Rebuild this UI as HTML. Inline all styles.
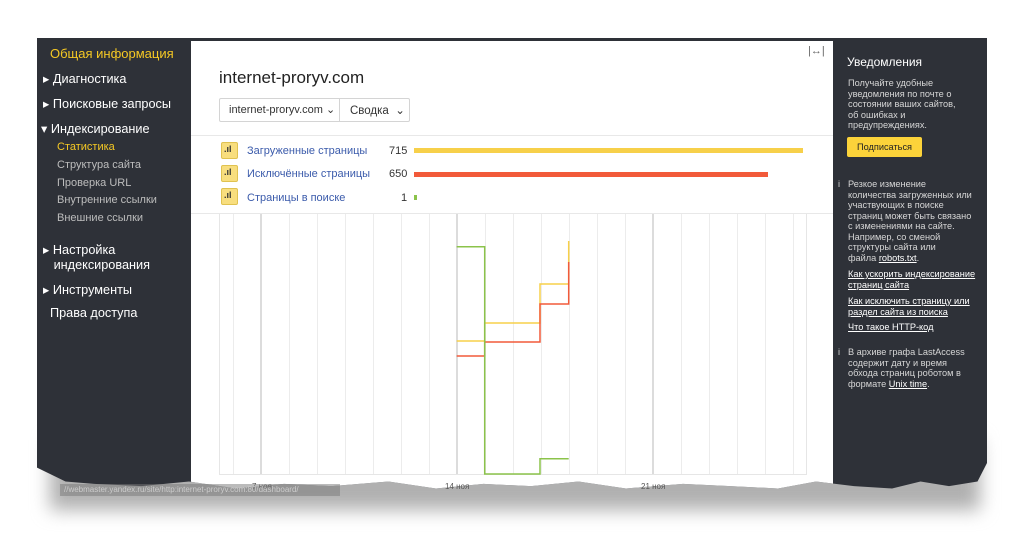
<!DOCTYPE html>
<html><head><meta charset="utf-8"><style>
*{margin:0;padding:0;box-sizing:border-box}
body{width:1024px;height:538px;background:#fff;position:relative;overflow:hidden;font-family:"Liberation Sans",Arial,sans-serif}
.a{position:absolute;white-space:nowrap}
#shadow{position:absolute;left:50px;top:440px;width:930px;height:70px;background:#b0b0b0;filter:blur(9px)}
#frame{position:absolute;left:37px;top:38px;width:950px;height:462px;background:#2e3138;
clip-path:polygon(0 0,100% 0,100% 92%,99% 96%,96% 97%,93% 96%,90% 97.5%,86% 97%,82% 96%,78% 97.5%,73% 97%,68% 96.5%,62% 97.5%,57% 96%,52% 97%,47% 96.5%,42% 97.5%,37% 96%,31% 97%,26% 96.5%,21% 97.5%,16% 96%,11% 97%,6% 96.5%,3% 96%,0 93%)}
#main{position:absolute;left:154px;top:3px;width:642px;height:467px;background:#fff}
.sb{color:#fff;font-size:12.7px}
.sub{color:#bdbdbd;font-size:11px}
.rt{color:#d6d6d6;font-size:9.2px;line-height:10.5px}
.rt u{color:#fff}
.lnk{color:#3b5bab;font-size:11px}
.ic{position:absolute;width:17px;height:17px;background:#f8de7e;border:1px solid #e0c250;border-radius:2px}
</style></head><body>
<div id="shadow"></div>
<div id="frame"><div id="main"></div></div>

<div class="a" style="left:50px;top:46px;color:#f6c924;font-size:13px">Общая информация</div>
<div class="a sb" style="left:43px;top:71px">▸ Диагностика</div>
<div class="a sb" style="left:43px;top:96px">▸ Поисковые запросы</div>
<div class="a sb" style="left:41px;top:121px">▾ Индексирование</div>
<div class="a sub" style="left:57px;top:141px;color:#f6c924">Статистика</div>
<div class="a sub" style="left:57px;top:159px">Структура сайта</div>
<div class="a sub" style="left:57px;top:177px">Проверка URL</div>
<div class="a sub" style="left:57px;top:194px">Внутренние ссылки</div>
<div class="a sub" style="left:57px;top:212px">Внешние ссылки</div>
<div class="a sb" style="left:43px;top:243px;line-height:15px">▸ Настройка<br>&nbsp;&nbsp;&nbsp;индексирования</div>
<div class="a sb" style="left:43px;top:282px">▸ Инструменты</div>
<div class="a sb" style="left:50px;top:306px">Права доступа</div>

<div class="a" style="left:808px;top:45px;color:#666;font-size:11px">|↔|</div>
<div class="a" style="left:219px;top:68px;color:#222;font-size:17px">internet-proryv.com</div>
<div class="a" style="left:219px;top:98px;width:191px;height:24px;border:1px solid #d4d4d4;border-radius:2px"></div>
<div class="a" style="left:339px;top:98px;width:1px;height:24px;background:#d4d4d4"></div>
<div class="a" style="left:229px;top:103px;font-size:11px;color:#333">internet-proryv.com ⌄</div>
<div class="a" style="left:350px;top:103px;font-size:11.5px;color:#333">Сводка &nbsp;⌄</div>
<div class="a" style="left:191px;top:135px;width:642px;height:1px;background:#e8e8e8"></div>
<div class="a" style="left:191px;top:213px;width:642px;height:1px;background:#e8e8e8"></div>

<div class="ic" style="left:221px;top:142px"></div><div class="a" style="left:224px;top:144px;font-size:9px;font-weight:bold;color:#333">.ıl</div>
<div class="ic" style="left:221px;top:165px"></div><div class="a" style="left:224px;top:167px;font-size:9px;font-weight:bold;color:#333">.ıl</div>
<div class="ic" style="left:221px;top:188px"></div><div class="a" style="left:224px;top:190px;font-size:9px;font-weight:bold;color:#333">.ıl</div>
<div class="a lnk" style="left:247px;top:145px">Загруженные страницы</div>
<div class="a lnk" style="left:247px;top:168px">Исключённые страницы</div>
<div class="a lnk" style="left:247px;top:192px">Страницы в поиске</div>
<div class="a" style="left:389px;top:145px;font-size:11px;color:#333">715</div>
<div class="a" style="left:389px;top:168px;font-size:11px;color:#333">650</div>
<div class="a" style="left:401px;top:192px;font-size:11px;color:#333">1</div>
<div class="a" style="left:414px;top:148px;width:389px;height:5px;background:#f7d04a"></div>
<div class="a" style="left:414px;top:172px;width:354px;height:5px;background:#f25a3a"></div>
<div class="a" style="left:414px;top:195px;width:3px;height:5px;background:#8bc34a"></div>

<svg class="a" style="left:0;top:0" width="1024" height="538">
<g stroke="#e6e6e6" stroke-width="1">
<line x1="219.5" y1="214" x2="219.5" y2="474"/>
<line x1="806.5" y1="214" x2="806.5" y2="474"/>
<line x1="219" y1="474.5" x2="807" y2="474.5"/>
</g>
<g stroke="#ececec" stroke-width="1" id="g"></g>
<g stroke="#dcdcdc" stroke-width="2">
<line x1="261" y1="214" x2="261" y2="474"/><line x1="457" y1="214" x2="457" y2="474"/><line x1="653" y1="214" x2="653" y2="474"/>
</g>
<polyline fill="none" stroke="#f7d04a" stroke-width="1.5" points="456.7,341 484.7,341 484.7,323 540,323 540,284 568.7,284 568.7,241"/>
<polyline fill="none" stroke="#f25a3a" stroke-width="1.5" points="456.7,356 484.7,356 484.7,342 540,342 540,304 568.7,304 568.7,262"/>
<polyline fill="none" stroke="#8bc34a" stroke-width="1.5" points="456.7,246.7 484.7,246.7 484.7,474 540,474 540,458.7 568.7,458.7"/>
<text x="252" y="489" font-size="8" fill="#555" font-family="Liberation Sans">7 ноя</text>
<text x="445" y="489" font-size="8" fill="#555" font-family="Liberation Sans">14 ноя</text>
<text x="641" y="489" font-size="8" fill="#555" font-family="Liberation Sans">21 ноя</text>
</svg>

<div class="a" style="left:847px;top:55px;color:#fff;font-size:12px">Уведомления</div>
<div class="a rt" style="left:848px;top:78px">Получайте удобные<br>уведомления по почте о<br>состоянии ваших сайтов,<br>об ошибках и<br>предупреждениях.</div>
<div class="a" style="left:847px;top:137px;width:75px;height:20px;background:#fcd33a;border-radius:2px;font-size:9.2px;color:#222;text-align:center;line-height:20px">Подписаться</div>
<div class="a rt" style="left:838px;top:179px">i</div>
<div class="a rt" style="left:848px;top:179px">Резкое изменение<br>количества загруженных или<br>участвующих в поиске<br>страниц может быть связано<br>с изменениями на сайте.<br>Например, со сменой<br>структуры сайта или<br>файла <u>robots.txt</u>.</div>
<div class="a rt" style="left:848px;top:269px;color:#fff"><u>Как ускорить индексирование<br>страниц сайта</u></div>
<div class="a rt" style="left:848px;top:296px;color:#fff"><u>Как исключить страницу или<br>раздел сайта из поиска</u></div>
<div class="a rt" style="left:848px;top:322px;color:#fff"><u>Что такое HTTP-код</u></div>
<div class="a rt" style="left:838px;top:347px">i</div>
<div class="a rt" style="left:848px;top:347px">В архиве графа LastAccess<br>содержит дату и время<br>обхода страниц роботом в<br>формате <u>Unix time</u>.</div>
<div class="a" style="left:60px;top:484px;width:280px;height:12px;background:rgba(120,120,120,.5);font-size:8px;color:#ccc;line-height:12px;padding-left:4px">//webmaster.yandex.ru/site/http:internet-proryv.com:80/dashboard/</div>
<script>
var g=document.getElementById('g'),s='';
for(var x=233;x<806;x+=28){s+='<line x1="'+(x+.5)+'" y1="214" x2="'+(x+.5)+'" y2="474"/>';}
g.innerHTML=s;
</script>
</body></html>
